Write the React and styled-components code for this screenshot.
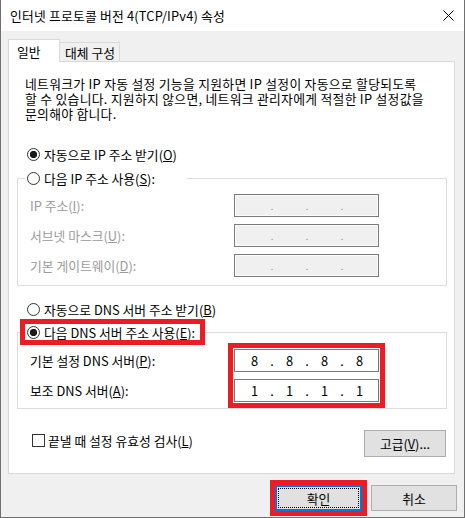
import React from "react";
import styled, { createGlobalStyle } from "styled-components";

const GlobalStyle = createGlobalStyle`
  html, body {
    margin: 0;
    background: #fff;
  }
  body {
    font-family: "Noto Sans CJK KR", "Noto Sans", sans-serif;
    font-size: 12.8px;
    color: #000;
  }
  * {
    box-sizing: border-box;
  }
`;

const RED = "#ed1c24";

const Window = styled.div`
  width: 465px;
  height: 518px;
  display: flex;
  flex-direction: column;
  background: #f0f0f0;
  border: 1px solid #707070;
  border-top: none;
`;

const TitleBar = styled.div`
  height: 31px;
  flex-shrink: 0;
  display: flex;
  align-items: center;
  justify-content: space-between;
  padding: 0 10px 0 9px;
  background: #fff;
`;

const Title = styled.span`
  line-height: 16px;
  letter-spacing: 0.2px;
  white-space: nowrap;
`;

const Body = styled.div`
  flex: 1;
  display: flex;
  flex-direction: column;
  padding: 8px 9px 0 7px;
`;

const TabRow = styled.div`
  display: flex;
  align-items: flex-end;
  height: 22px;
`;

const Tab = styled.div`
  display: flex;
  align-items: center;
  position: relative;
  z-index: 1;
  background: ${(p) => (p.$active ? "#fff" : "#f0f0f0")};
  border: 1px solid #d9d9d9;
  border-bottom: none;
  border-left: ${(p) => (p.$active ? "1px solid #d9d9d9" : "none")};
  height: ${(p) => (p.$active ? "23px" : "19px")};
  margin-bottom: ${(p) => (p.$active ? "-1px" : "0")};
  width: ${(p) => (p.$active ? "52px" : "60px")};
  padding-left: ${(p) => (p.$active ? "8px" : "5px")};
  white-space: nowrap;
`;

const Panel = styled.div`
  height: 413px;
  display: flex;
  flex-direction: column;
  background: #fff;
  border: 1px solid #d9d9d9;
  padding: 14px 7px 13px 8px;
`;

const Intro = styled.p`
  margin: 0;
  padding-left: 8px;
  line-height: 15px;
  letter-spacing: 0.3px;
  white-space: nowrap;
`;

const RadioLabel = styled.label`
  display: flex;
  align-items: center;
  gap: 4px;
  height: 16px;
  white-space: nowrap;
  margin-top: ${(p) => p.$top || 0}px;
  padding-left: ${(p) => (p.$inLegend ? 2 : 10)}px;
  width: ${(p) => (p.$width ? `${p.$width}px` : "auto")};
  outline: ${(p) => (p.$highlight ? `5px solid ${RED}` : "none")};
`;

const RadioDot = styled.span`
  width: 13px;
  height: 13px;
  flex-shrink: 0;
  border-radius: 50%;
  border: 1px solid #333;
  background: ${(p) =>
    p.$checked
      ? "radial-gradient(circle, #1a1a1a 0, #1a1a1a 3.4px, #fff 3.9px)"
      : "#fff"};
`;

const Group = styled.fieldset`
  margin: ${(p) => p.$top || 0}px 0 0 0;
  padding: ${(p) => p.$padTop}px 0 ${(p) => p.$padBottom}px 0;
  border: 1px solid #dcdcdc;
  min-width: 0;
`;

const Legend = styled.legend`
  padding: 0;
  margin-left: 7px;
  width: ${(p) => p.$width}px;
  height: 16px;
`;

const FieldGrid = styled.div`
  display: flex;
  padding-left: 12px;
`;

const LabelCol = styled.div`
  width: 204px;
  display: flex;
  flex-direction: column;
  gap: 7px;
`;

const FieldLabel = styled.div`
  height: 23px;
  display: flex;
  align-items: center;
  white-space: nowrap;
  color: ${(p) => (p.$disabled ? "#9b9b9b" : "#000")};
`;

const InputCol = styled.div`
  display: flex;
  flex-direction: column;
  gap: 7px;
  outline: ${(p) => (p.$highlight ? `5px solid ${RED}` : "none")};
  outline-offset: 1px;
`;

const IpBox = styled.div`
  width: 145px;
  height: 23px;
  display: flex;
  align-items: center;
  padding-left: 5px;
  border: 1px solid #7a7a7a;
  box-shadow: inset 0 0 0 1px #fbfbfb;
  background: ${(p) => (p.$disabled ? "#f0f0f0" : "#fff")};
  color: ${(p) => (p.$disabled ? "#8a8a8a" : "#000")};
`;

const Octet = styled.span`
  width: 29px;
  text-align: center;
`;

const Sep = styled.span`
  width: 6px;
  text-align: center;
  font-size: ${(p) => (p.$small ? "9px" : "12.8px")};
  line-height: 12px;
  padding-top: ${(p) => (p.$small ? "3px" : "0")};
`;

const CheckRow = styled.div`
  display: flex;
  justify-content: space-between;
  align-items: flex-start;
  margin-top: 21px;
  padding: 0 1px 0 15px;
`;

const CheckLabel = styled.label`
  display: flex;
  align-items: center;
  gap: 3px;
  height: 16px;
  margin-top: 2px;
  white-space: nowrap;
`;

const CheckBox = styled.span`
  width: 13px;
  height: 13px;
  border: 1px solid #333;
  background: #fff;
`;

const Button = styled.button`
  display: flex;
  align-items: center;
  justify-content: center;
  width: ${(p) => p.$w}px;
  height: ${(p) => p.$h}px;
  padding: 0;
  font: inherit;
  color: #000;
  background: #e1e1e1;
  border: 1px solid #adadad;
  white-space: nowrap;
`;

const DefaultButton = styled(Button)`
  border: 2px solid #0078d7;
  outline: 5px solid ${RED};
  padding: 1px;
`;

const FocusRing = styled.span`
  flex: 1;
  align-self: stretch;
  display: flex;
  align-items: center;
  justify-content: center;
  border: 1px dotted #000;
`;

const Footer = styled.div`
  display: flex;
  justify-content: flex-end;
  gap: 9px;
  margin: 11px -2px 0 0;
`;

const CloseIcon = () => (
  <svg width="11" height="11" viewBox="0 0 11 11">
    <path d="M0.5 0.5 L10.5 10.5 M10.5 0.5 L0.5 10.5" stroke="#000" strokeWidth="1" />
  </svg>
);

const Radio = ({ checked, children, ...rest }) => (
  <RadioLabel {...rest}>
    <RadioDot $checked={checked} />
    <span>{children}</span>
  </RadioLabel>
);

const IpField = ({ values, disabled }) => (
  <IpBox $disabled={disabled}>
    {[0, 1, 2, 3].map((i) => (
      <React.Fragment key={i}>
        <Octet>{values ? values[i] : ""}</Octet>
        {i < 3 && <Sep $small={disabled}>.</Sep>}
      </React.Fragment>
    ))}
  </IpBox>
);

export default function App() {
  return (
    <>
      <GlobalStyle />
      <Window>
        <TitleBar>
          <Title>인터넷 프로토콜 버전 4(TCP/IPv4) 속성</Title>
          <CloseIcon />
        </TitleBar>
        <Body>
          <TabRow>
            <Tab $active>일반</Tab>
            <Tab>대체 구성</Tab>
          </TabRow>
          <Panel>
            <Intro>
              네트워크가 IP 자동 설정 기능을 지원하면 IP 설정이 자동으로 할당되도록
              <br />
              할 수 있습니다. 지원하지 않으면, 네트워크 관리자에게 적절한 IP 설정값을
              <br />
              문의해야 합니다.
            </Intro>

            <Radio checked $top={25}>
              자동으로 IP 주소 받기(<u>O</u>)
            </Radio>

            <Group $top={8} $padTop={8} $padBottom={8}>
              <Legend $width={162}>
                <Radio $inLegend>
                  다음 IP 주소 사용(<u>S</u>):
                </Radio>
              </Legend>
              <FieldGrid>
                <LabelCol>
                  <FieldLabel $disabled>
                    IP 주소(<u>I</u>):
                  </FieldLabel>
                  <FieldLabel $disabled>
                    서브넷 마스크(<u>U</u>):
                  </FieldLabel>
                  <FieldLabel $disabled>
                    기본 게이트웨이(<u>D</u>):
                  </FieldLabel>
                </LabelCol>
                <InputCol>
                  <IpField disabled />
                  <IpField disabled />
                  <IpField disabled />
                </InputCol>
              </FieldGrid>
            </Group>

            <Radio $top={15}>
              자동으로 DNS 서버 주소 받기(<u>B</u>)
            </Radio>

            <Group $top={7} $padTop={9} $padBottom={6}>
              <Legend $width={175}>
                <Radio checked $inLegend $highlight $width={175}>
                  다음 DNS 서버 주소 사용(<u>E</u>):
                </Radio>
              </Legend>
              <FieldGrid>
                <LabelCol>
                  <FieldLabel>
                    기본 설정 DNS 서버(<u>P</u>):
                  </FieldLabel>
                  <FieldLabel>
                    보조 DNS 서버(<u>A</u>):
                  </FieldLabel>
                </LabelCol>
                <InputCol $highlight>
                  <IpField values={["8", "8", "8", "8"]} />
                  <IpField values={["1", "1", "1", "1"]} />
                </InputCol>
              </FieldGrid>
            </Group>

            <CheckRow>
              <CheckLabel>
                <CheckBox />
                <span>
                  끝낼 때 설정 유효성 검사(<u>L</u>)
                </span>
              </CheckLabel>
              <Button $w={82} $h={27}>
                고급(<u>V</u>)...
              </Button>
            </CheckRow>
          </Panel>

          <Footer>
            <DefaultButton $w={87} $h={26}>
              <FocusRing>확인</FocusRing>
            </DefaultButton>
            <Button $w={86} $h={26}>
              취소
            </Button>
          </Footer>
        </Body>
      </Window>
    </>
  );
}
